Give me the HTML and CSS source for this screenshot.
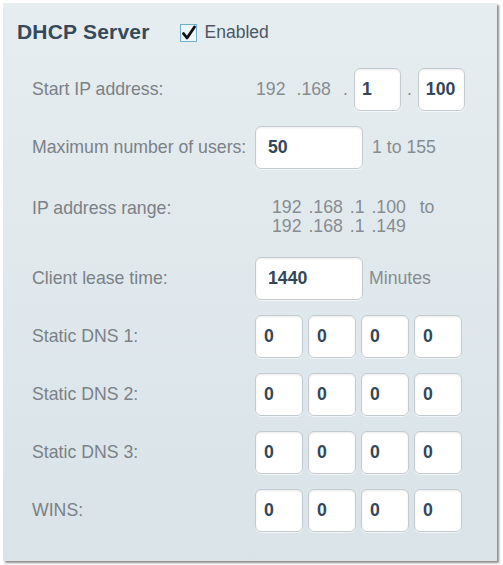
FILE: index.html
```html
<!DOCTYPE html>
<html>
<head>
<meta charset="utf-8">
<link rel="stylesheet" href="styles.css">
</head>
<body>
<div class="panel">
  <div class="head">
    <h2 class="title">DHCP Server</h2>
    <label class="chk">
      <svg class="chk-box" width="17" height="18" viewBox="0 0 17 18">
        <rect x="0.5" y="0.5" width="16" height="17" fill="#eef5f8" stroke="#6fb0cf"/>
        <path d="M3.5 9.5 L7 14 L14.5 3" fill="none" stroke="#111" stroke-width="2.8" stroke-linecap="round" stroke-linejoin="round"/>
      </svg>
      <span>Enabled</span>
    </label>
  </div>
  <div class="rows">
    <div class="row">
      <span class="lbl">Start IP address:</span>
      <div class="val">
        <span class="gray g192">192</span>
        <span class="gray g168">.168</span>
        <span class="gray dot">.</span>
        <input class="fld sm" type="text" value="1">
        <span class="gray dot2">.</span>
        <input class="fld sm" type="text" value="100">
      </div>
    </div>
    <div class="row">
      <span class="lbl">Maximum number of users:</span>
      <div class="val">
        <input class="fld wide" type="text" value="50">
        <span class="gray note">1 to 155</span>
      </div>
    </div>
    <div class="row range">
      <span class="lbl">IP address range:</span>
      <div class="range-txt">
        <div>192 .168 .1 .100 &nbsp;to</div>
        <div>192 .168 .1 .149</div>
      </div>
    </div>
    <div class="row">
      <span class="lbl">Client lease time:</span>
      <div class="val">
        <input class="fld wide" type="text" value="1440">
        <span class="gray unit">Minutes</span>
      </div>
    </div>
    <div class="row">
      <span class="lbl">Static DNS 1:</span>
      <div class="val quad">
        <input class="fld q" type="text" value="0"><input class="fld q" type="text" value="0"><input class="fld q" type="text" value="0"><input class="fld q" type="text" value="0">
      </div>
    </div>
    <div class="row">
      <span class="lbl">Static DNS 2:</span>
      <div class="val quad">
        <input class="fld q" type="text" value="0"><input class="fld q" type="text" value="0"><input class="fld q" type="text" value="0"><input class="fld q" type="text" value="0">
      </div>
    </div>
    <div class="row">
      <span class="lbl">Static DNS 3:</span>
      <div class="val quad">
        <input class="fld q" type="text" value="0"><input class="fld q" type="text" value="0"><input class="fld q" type="text" value="0"><input class="fld q" type="text" value="0">
      </div>
    </div>
    <div class="row">
      <span class="lbl">WINS:</span>
      <div class="val quad">
        <input class="fld q" type="text" value="0"><input class="fld q" type="text" value="0"><input class="fld q" type="text" value="0"><input class="fld q" type="text" value="0">
      </div>
    </div>
  </div>
</div>
</body>
</html>
```

FILE: styles.css
```css
html, body {
  margin: 0;
  padding: 0;
  background: #ffffff;
}
body {
  font-family: "Liberation Sans", Arial, sans-serif;
  width: 503px;
  height: 565px;
  overflow: hidden;
}
.panel {
  box-sizing: border-box;
  margin: 3px 0 0 3px;
  width: 494px;
  padding: 17px 14px 29px 14px;
  background: linear-gradient(#e6edf0, #d9e3e8);
  box-shadow: 2px 2px 2px rgba(0, 0, 0, 0.45);
}
.head {
  display: flex;
  align-items: center;
  height: 24px;
}
.title {
  margin: 0;
  font-size: 21px;
  font-weight: bold;
  color: #35495a;
  letter-spacing: 0.2px;
  line-height: 24px;
}
.chk {
  display: flex;
  align-items: center;
  margin-left: 30px;
  font-size: 17.5px;
  color: #4b5862;
}
.chk-box {
  display: block;
  margin-right: 8px;
  margin-top: 1px;
}
.rows {
  margin-top: 24px;
  padding-left: 15px;
}
.row {
  display: flex;
  align-items: center;
  min-height: 43px;
  margin-bottom: 15px;
}
.row:last-child {
  margin-bottom: 0;
}
.lbl {
  width: 223px;
  flex: none;
  font-size: 17.7px;
  color: #7b8186;
}
.val {
  display: flex;
  align-items: center;
}
.gray {
  font-size: 17.7px;
  color: #878c91;
}
.g192 { margin-left: 1px; }
.g168 { margin-left: 11px; }
.dot { margin-left: 12px; margin-right: 6px; }
.dot2 { margin-left: 6px; margin-right: 6px; }
.note { margin-left: 9px; }
.unit { margin-left: 6px; }
.fld {
  box-sizing: border-box;
  height: 43px;
  margin: 0;
  border: 1px solid #c3cbd0;
  border-radius: 6px;
  background: #ffffff;
  box-shadow: inset 0 1px 2px rgba(0, 0, 0, 0.08), 0 1px 0 rgba(255, 255, 255, 0.6);
  font-family: "Liberation Sans", Arial, sans-serif;
  font-size: 17.7px;
  font-weight: bold;
  color: #33475a;
  outline: none;
}
.sm {
  width: 47px;
  padding: 0 0 0 7px;
}
.wide {
  width: 108px;
  padding: 0 0 0 12px;
}
.quad {
  gap: 5px;
}
.q {
  width: 48px;
  padding: 0 0 0 8px;
}
.row.range {
  align-items: flex-start;
  padding: 14px 0 6px 0;
  min-height: 0;
}
.row.range .lbl {
  line-height: 20px;
}
.range-txt {
  margin-left: 17px;
  font-size: 17.7px;
  line-height: 19px;
  color: #878c91;
  word-spacing: 2px;
}
```
